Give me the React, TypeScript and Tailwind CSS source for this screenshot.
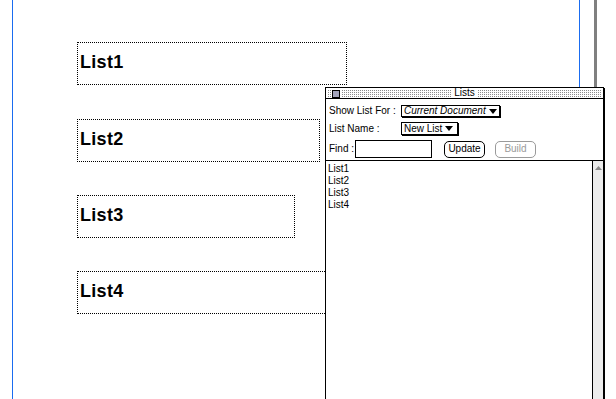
import React from "react";

const Tri = () => (
  <svg width="8" height="5" viewBox="0 0 8 5" className="ml-[3px] shrink-0">
    <polygon points="0,0 8,0 4,5" fill="#000" />
  </svg>
);

function CanvasBox({ label, w, mt }: { label: string; w: string; mt: string }) {
  return (
    <div
      className={`${w} ${mt} h-[43px] border border-dotted border-black flex items-center pl-[2px] pb-[4px]`}
    >
      <span className="font-['Liberation_Sans',Arial,sans-serif] font-bold text-[18px] leading-none tracking-[0.3px] text-black">
        {label}
      </span>
    </div>
  );
}

export default function App() {
  return (
    <div className="relative w-[616px] h-[399px] overflow-hidden bg-white">
      {/* page guides */}
      <div className="absolute left-[12px] top-0 w-px h-full bg-[#1a6cf0]" />
      <div className="absolute left-[579px] top-0 w-px h-[90px] bg-[#1a6cf0]" />
      <div className="absolute left-[594px] top-0 w-[3px] h-[90px] bg-[#808080]" />

      {/* canvas boxes */}
      <div className="flex flex-col pl-[77px] pt-[42px]">
        <CanvasBox label="List1" w="w-[270px]" mt="mt-0" />
        <CanvasBox label="List2" w="w-[243px]" mt="mt-[34px]" />
        <CanvasBox label="List3" w="w-[218px]" mt="mt-[33px]" />
        <CanvasBox label="List4" w="w-[300px]" mt="mt-[33px]" />
      </div>

      {/* floating Lists palette */}
      <div className="absolute left-[325px] top-[87px] w-[279px] h-[330px] bg-white border border-black shadow-[1px_1px_0_#000] flex flex-col font-['Liberation_Sans',Arial,sans-serif] text-[10px] text-black">
        {/* title bar */}
        <div className="relative h-[11px] border-b border-black p-[1px] shrink-0">
          <div className="h-full w-full bg-[linear-gradient(90deg,#fff_1px,transparent_1px),linear-gradient(#fff_1px,#8c8c8c_1px)] bg-[length:2px_2px]" />
          <div className="absolute left-[5px] top-[1px] bg-white px-[1px] h-[9px] flex items-center">
            <div className="w-[8px] h-[8px] border border-black bg-[#a4a4bc]" />
          </div>
          <div className="absolute inset-0 flex items-center justify-center">
            <span className="bg-white px-[2px] leading-[10px] text-[10px]">Lists</span>
          </div>
        </div>

        {/* controls */}
        <div className="h-[61px] pl-[3px] pt-[6px] shrink-0">
          <div className="flex items-center h-[12px]">
            <span className="w-[72px] leading-none">Show List For :</span>
            <div className="h-[12px] w-[99px] border border-black shadow-[1px_1px_0_#000] flex items-center pl-[2px] italic leading-none">
              Current Document
              <Tri />
            </div>
          </div>
          <div className="flex items-center h-[13px] mt-[5px]">
            <span className="w-[72px] leading-none">List Name :</span>
            <div className="h-[13px] w-[57px] border border-black shadow-[1px_1px_0_#000] flex items-center pl-[2px] leading-none">
              New List
              <Tri />
            </div>
          </div>
          <div className="flex items-center h-[18px] mt-[5px]">
            <span className="w-[26px] leading-none">Find :</span>
            <div className="h-[18px] w-[77px] border border-black" />
            <div className="ml-[12px] h-[17px] w-[41px] border border-black rounded-[5px] flex items-center justify-center leading-none">
              Update
            </div>
            <div className="ml-[10px] h-[17px] w-[41px] border border-[#9a9a9a] rounded-[5px] flex items-center justify-center leading-none text-[#9a9a9a]">
              Build
            </div>
          </div>
        </div>

        {/* list area */}
        <div className="flex flex-1 border-t border-black">
          <div className="flex-1 pl-[2px] pt-[2px] leading-[12px]">
            <div>List1</div>
            <div>List2</div>
            <div>List3</div>
            <div>List4</div>
          </div>
          <div className="w-[11px] border-l border-black bg-[#ececec] flex flex-col">
            <div className="h-[13px] flex items-center justify-center">
              <svg width="7" height="4" viewBox="0 0 7 4">
                <polygon points="3.5,0 7,4 0,4" fill="#8a8a8a" />
              </svg>
            </div>
          </div>
        </div>
      </div>
    </div>
  );
}
